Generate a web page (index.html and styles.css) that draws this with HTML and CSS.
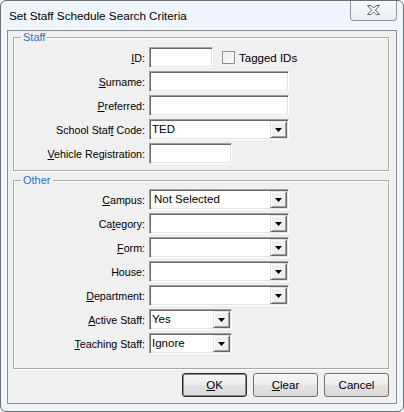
FILE: index.html
```html
<!DOCTYPE html>
<html>
<head>
<meta charset="utf-8">
<link rel="stylesheet" href="styles.css">
</head>
<body>
<div class="window">
  <div class="titlebar">
    <span class="title">Set Staff Schedule Search Criteria</span>
    <div class="close">
      <svg width="13" height="10" viewBox="0 0 13 10"><path d="M0.5 0.5 H4 L6.5 3 L9 0.5 H12.5 L8.5 5 L12.5 9.5 H9 L6.5 7 L4 9.5 H0.5 L4.5 5 Z" fill="#f2f4f6" stroke="#5e6670" stroke-width="1" stroke-linejoin="round"/></svg>
    </div>
  </div>
  <div class="client">
    <fieldset class="group staff">
      <legend>Staff</legend>
      <div class="form">
        <span class="lbl"><u>I</u>D:</span>
        <div class="ctl"><span class="edit w64"></span><span class="check"></span><span class="checklbl">Tagged IDs</span></div>
        <span class="lbl"><u>S</u>urname:</span>
        <div class="ctl"><span class="edit w140"></span></div>
        <span class="lbl"><u>P</u>referred:</span>
        <div class="ctl"><span class="edit w140"></span></div>
        <span class="lbl">School Staf<u>f</u> Code:</span>
        <div class="ctl"><span class="combo w140"><span class="val">TED</span><span class="drop"><svg width="7" height="4" viewBox="0 0 7 4"><path d="M0 0H7L3.5 4Z" fill="#000"/></svg></span></span></div>
        <span class="lbl"><u>V</u>ehicle Registration:</span>
        <div class="ctl"><span class="edit w83"></span></div>
      </div>
    </fieldset>
    <fieldset class="group other">
      <legend>Other</legend>
      <div class="form">
        <span class="lbl"><u>C</u>ampus:</span>
        <div class="ctl"><span class="combo w140"><span class="val inset">Not Selected</span><span class="drop"><svg width="7" height="4" viewBox="0 0 7 4"><path d="M0 0H7L3.5 4Z" fill="#000"/></svg></span></span></div>
        <span class="lbl">Ca<u>t</u>egory:</span>
        <div class="ctl"><span class="combo w140"><span class="val"></span><span class="drop"><svg width="7" height="4" viewBox="0 0 7 4"><path d="M0 0H7L3.5 4Z" fill="#000"/></svg></span></span></div>
        <span class="lbl"><u>F</u>orm:</span>
        <div class="ctl"><span class="combo w140"><span class="val"></span><span class="drop"><svg width="7" height="4" viewBox="0 0 7 4"><path d="M0 0H7L3.5 4Z" fill="#000"/></svg></span></span></div>
        <span class="lbl">House:</span>
        <div class="ctl"><span class="combo w140"><span class="val"></span><span class="drop"><svg width="7" height="4" viewBox="0 0 7 4"><path d="M0 0H7L3.5 4Z" fill="#000"/></svg></span></span></div>
        <span class="lbl"><u>D</u>epartment:</span>
        <div class="ctl"><span class="combo w140"><span class="val"></span><span class="drop"><svg width="7" height="4" viewBox="0 0 7 4"><path d="M0 0H7L3.5 4Z" fill="#000"/></svg></span></span></div>
        <span class="lbl"><u>A</u>ctive Staff:</span>
        <div class="ctl"><span class="combo w83"><span class="val">Yes</span><span class="drop"><svg width="7" height="4" viewBox="0 0 7 4"><path d="M0 0H7L3.5 4Z" fill="#000"/></svg></span></span></div>
        <span class="lbl"><u>T</u>eaching Staff:</span>
        <div class="ctl"><span class="combo w83"><span class="val">Ignore</span><span class="drop"><svg width="7" height="4" viewBox="0 0 7 4"><path d="M0 0H7L3.5 4Z" fill="#000"/></svg></span></span></div>
      </div>
    </fieldset>
    <div class="buttons">
      <button class="btn default"><u>O</u>K</button>
      <button class="btn"><u>C</u>lear</button>
      <button class="btn">Cancel</button>
    </div>
  </div>
</div>
</body>
</html>
```

FILE: styles.css
```css
html, body {
  margin: 0;
  padding: 0;
  background: #ffffff;
}
body {
  width: 404px;
  height: 412px;
  font-family: "Liberation Sans", Arial, sans-serif;
  font-size: 10.7px;
  color: #000;
}
.window {
  box-sizing: border-box;
  width: 404px;
  height: 412px;
  border: 1px solid #6b6f74;
  border-radius: 6px;
  background: #eef5fb;
  display: flex;
  flex-direction: column;
}
.titlebar {
  height: 29px;
  display: flex;
  justify-content: space-between;
  align-items: flex-start;
  padding: 0 6px 0 8px;
}
.title {
  font-size: 11.7px;
  line-height: 15px;
  padding-top: 7px;
  color: #000;
}
.close {
  box-sizing: border-box;
  width: 47px;
  height: 20px;
  border: 1px solid #8f979f;
  border-top: none;
  border-radius: 0 0 4px 4px;
  background: linear-gradient(#f7fafc, #e9eff4);
  display: flex;
  align-items: center;
  justify-content: center;
  padding-bottom: 1px;
}
.client {
  flex: 1;
  margin: 0 6px 7px 6px;
  border: 1px solid #8a8e93;
  background: #f0f0f0;
  padding: 0 7px 0 5px;
  display: flex;
  flex-direction: column;
}
.group {
  margin: 0;
  border: 1px solid #a9a9a9;
  box-shadow: inset 1px 1px 0 #ffffff, 1px 1px 0 #ffffff;
  padding: 3px 0 6px 0;
  min-width: 0;
}
.group legend {
  margin-left: 7px;
  padding: 0 2px;
  line-height: 13px;
  font-size: 11px;
  color: #1f6fd9;
}
.group.other {
  margin-top: 3px;
  padding: 2px 0 14px 0;
}
.form {
  display: grid;
  grid-template-columns: 131px 1fr;
  column-gap: 4px;
  row-gap: 3px;
  grid-auto-rows: 21px;
}
.lbl {
  text-align: right;
  align-self: center;
  white-space: nowrap;
}
.ctl {
  display: flex;
  align-items: center;
}
.edit, .combo {
  box-sizing: border-box;
  height: 21px;
  border: 1px solid;
  border-color: #a0a0a0 #ffffff #ffffff #a0a0a0;
  box-shadow: inset 1px 1px 0 #696969, inset -1px -1px 0 #e3e3e3;
  padding: 1px;
  background: #ffffff;
  display: flex;
}
.w64 { width: 64px; }
.w83 { width: 83px; }
.w140 { width: 140px; }
.val {
  flex: 1;
  padding-left: 1px;
  line-height: 17px;
  font-size: 11.5px;
}
.val.inset {
  padding-left: 3px;
}
.drop {
  box-sizing: border-box;
  width: 17px;
  height: 17px;
  border: 1px solid;
  border-color: #e3e3e3 #696969 #696969 #e3e3e3;
  box-shadow: inset 1px 1px 0 #ffffff, inset -1px -1px 0 #a0a0a0;
  background: #f0f0f0;
  display: flex;
  align-items: center;
  justify-content: center;
  padding-top: 1px;
}
.drop svg { display: block; }
.check {
  box-sizing: border-box;
  width: 13px;
  height: 13px;
  margin-left: 9px;
  border: 1px solid #8e8f8f;
  background: linear-gradient(135deg, #e8e8e8, #fdfdfd);
  box-shadow: inset 0 0 0 1px #f7f7f7;
}
.checklbl {
  margin-left: 4px;
  font-size: 11.5px;
}
.buttons {
  margin-top: 4px;
  display: flex;
  justify-content: flex-end;
  gap: 6px;
}
.btn {
  box-sizing: border-box;
  width: 65px;
  height: 24px;
  border: 1px solid #707070;
  border-radius: 3px;
  background: linear-gradient(#f6f6f6 0%, #ececec 50%, #e2e2e2 51%, #dadada 100%);
  font-family: "Liberation Sans", Arial, sans-serif;
  font-size: 11.5px;
  color: #000;
  padding: 0;
}
.btn.default {
  border-color: #2b2b2b;
  box-shadow: inset 0 0 0 1px #8a8a8a;
}
```
